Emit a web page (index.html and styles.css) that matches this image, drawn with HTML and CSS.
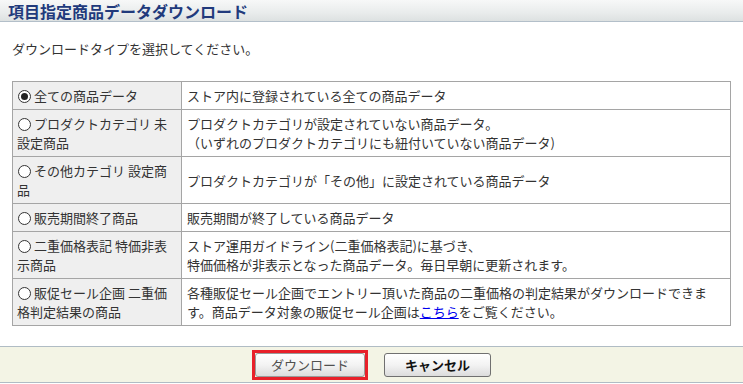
FILE: index.html
```html
<!DOCTYPE html>
<html lang="ja">
<head>
  <meta charset="UTF-8" />
  <title>項目指定商品データダウンロード</title>
  <link rel="stylesheet" href="styles.css">
</head>
<body>

<div class="page-head">
  <h1>項目指定商品データダウンロード</h1>
</div>

<p class="lead">ダウンロードタイプを選択してください。</p>

<table class="type-table">
  <tr>
    <th><span class="radio checked"></span>全ての商品データ</th>
    <td>ストア内に登録されている全ての商品データ</td>
  </tr>
  <tr>
    <th><span class="radio"></span>プロダクトカテゴリ 未設定商品</th>
    <td>プロダクトカテゴリが設定されていない商品データ。<br>（いずれのプロダクトカテゴリにも紐付いていない商品データ)</td>
  </tr>
  <tr>
    <th><span class="radio"></span>その他カテゴリ 設定商品</th>
    <td>プロダクトカテゴリが「その他」に設定されている商品データ</td>
  </tr>
  <tr>
    <th><span class="radio"></span>販売期間終了商品</th>
    <td>販売期間が終了している商品データ</td>
  </tr>
  <tr>
    <th><span class="radio"></span>二重価格表記 特価非表示商品</th>
    <td>ストア運用ガイドライン(二重価格表記)に基づき、<br>特価価格が非表示となった商品データ。毎日早朝に更新されます。</td>
  </tr>
  <tr>
    <th><span class="radio"></span>販促セール企画 二重価格判定結果の商品</th>
    <td>各種販促セール企画でエントリー頂いた商品の二重価格の判定結果がダウンロードできます。商品データ対象の販促セール企画は<a href="#">こちら</a>をご覧ください。</td>
  </tr>
</table>

<!-- footer buttons -->
<div class="actions">
  <span class="focus-ring"><button class="btn">ダウンロード</button></span>
  <button class="btn btn-bold">キャンセル</button>
</div>

</body>
</html>
```
FILE: styles.css
```css
* {
  margin: 0;
  padding: 0;
  box-sizing: border-box;
}

body {
  font-family: "Noto Sans CJK JP", "Noto Sans", sans-serif;
  font-size: 13px;
  line-height: 19px;
  color: #333;
  background: #fff;
  width: 743px;
}

.page-head {
  height: 22px;
  background: linear-gradient(#f7f8f8 0%, #e9ecec 60%, #dde1e1 100%);
  border-bottom: 1px solid #b3bfc9;
  padding: 1px 0 0 8px;
}

.page-head h1 {
  font-size: 16px;
  line-height: 20px;
  font-weight: bold;
  color: #213a7c;
}

.lead {
  margin: 17px 0 0 12px;
}

.type-table {
  margin: 23px 0 0 12px;
  width: 719px;
  border-collapse: collapse;
}

.type-table th,
.type-table td {
  border: 1px solid #a5a5a5;
  padding: 4px 5px 4px;
  text-align: left;
  vertical-align: middle;
  font-weight: normal;
}

.type-table th {
  width: 169px;
  background: #efefef;
  padding-left: 4px;
}

.type-table a {
  color: #0000ee;
}

.radio {
  display: inline-block;
  width: 13px;
  height: 13px;
  border: 1px solid #333;
  border-radius: 50%;
  margin: 0 3px 0 1px;
  vertical-align: -2px;
  position: relative;
  background: #fff;
}

.radio.checked::after {
  content: "";
  position: absolute;
  left: 2px;
  top: 2px;
  width: 7px;
  height: 7px;
  border-radius: 50%;
  background: #222;
}

.actions {
  margin-top: 20px;
  height: 37px;
  background: #f3f4e5;
  border-top: 1px solid #b0bcc4;
  border-bottom: 1px solid #b0bcc4;
  display: flex;
  justify-content: center;
  align-items: center;
  gap: 16px;
}

.focus-ring {
  display: inline-block;
  border: 3px solid #e8202a;
}

.btn {
  font-family: inherit;
  font-size: 13px;
  line-height: 18px;
  height: 24px;
  width: 110px;
  background: linear-gradient(#ffffff 0%, #f3f3f3 50%, #dcdcdc 100%);
  border: 1px solid #9a9a9a;
  border-radius: 3px;
  color: #505050;
  cursor: pointer;
  display: block;
}

.btn-bold {
  width: 107px;
  font-weight: bold;
  color: #111;
  border-color: #707070;
}
```
